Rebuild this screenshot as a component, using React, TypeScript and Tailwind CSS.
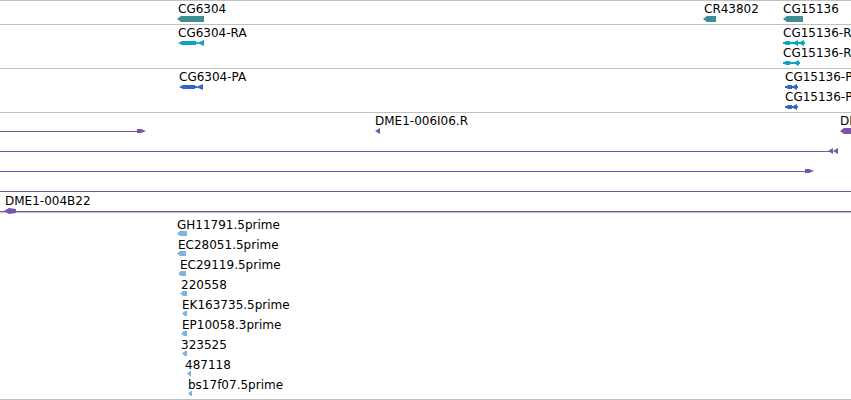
import React from 'react';

// colours picked off the reference
const TEAL = '#3d8f93';
const CYAN = '#0fa2c4';
const BLUE = '#3565c9';
const PURPLE = '#7655aa';
const EST = '#7db5e0';

// glyphs ---------------------------------------------------------------

function RevBar({ w, h = 6, color }: { w: number; h?: number; color: string }) {
  return (
    <svg width={w} height={h} className="block">
      <polygon points={`0,${h / 2} 4,0 ${w},0 ${w},${h} 4,${h}`} fill={color} />
    </svg>
  );
}

function Fish({ w, color }: { w: number; color: string }) {
  return (
    <svg width={w} height={6} className="block">
      <polygon points={`0,3 4,1 ${w - 8},1 ${w - 8},5 4,5`} fill={color} />
      <rect x={w - 9} y={2} width={3} height={2} fill={color} />
      <polygon points={`${w - 7},3 ${w},0 ${w},6`} fill={color} />
    </svg>
  );
}

function Arrows({ w, heads, color }: { w: number; heads: number[]; color: string }) {
  return (
    <svg width={w} height={6} className="block">
      <rect x={0} y={2} width={w} height={2} fill={color} />
      <polygon points="0,3 3,1 7,1 7,5 3,5" fill={color} />
      {heads.map(hx => (
        <polygon key={hx} points={`${hx},3 ${hx + 6},0 ${hx + 6},6`} fill={color} />
      ))}
    </svg>
  );
}

function Head({ dir, color = PURPLE, double = false }: { dir: 'l' | 'r'; color?: string; double?: boolean }) {
  if (dir === 'r')
    return (
      <svg width={9} height={6} className="block">
        <polygon points="0,1 4,1 9,3 4,5 0,5" fill={color} />
      </svg>
    );
  return (
    <svg width={double ? 11 : 5} height={6} className="block">
      <polygon points="0,3 5,0 5,6" fill={color} />
      {double && <polygon points="5,3 10,0 10,6" fill={color} />}
    </svg>
  );
}

// a feature sits at its genome position; label over glyph
function Feature({ x, label, dx = 0, top = 1, children }: {
  x: number; label?: string; dx?: number; top?: number; children: React.ReactNode;
}) {
  return (
    <div className="absolute flex flex-col" style={{ left: x, top }}>
      {label && <span className="whitespace-nowrap leading-[14px] text-black">{label}</span>}
      <div style={{ marginLeft: dx }}>{children}</div>
    </div>
  );
}

function Row({ children }: { children?: React.ReactNode }) {
  return <div className="relative h-[20px] shrink-0">{children}</div>;
}

// purple alignment line through the glyph row
function Rule({ to }: { to?: number }) {
  return <div className="absolute left-0 top-[18px] h-px bg-[#7655aa]" style={{ width: to ?? '100%' }} />;
}

function Track({ h, last = false, children }: { h: string; last?: boolean; children: React.ReactNode }) {
  return (
    <section className={`flex flex-col border-t border-[#c0c0c0] ${h} ${last ? 'border-b' : ''}`}>{children}</section>
  );
}

const ests = [
  { name: 'GH11791.5prime', tx: 177, ax: 0, aw: 10 },
  { name: 'EC28051.5prime', tx: 178, ax: -1, aw: 9 },
  { name: 'EC29119.5prime', tx: 180, ax: -2, aw: 8 },
  { name: '220558', tx: 181, ax: -1, aw: 7 },
  { name: 'EK163735.5prime', tx: 182, ax: 0, aw: 5 },
  { name: 'EP10058.3prime', tx: 182, ax: -1, aw: 6 },
  { name: '323525', tx: 181, ax: 1, aw: 5 },
  { name: '487118', tx: 185, ax: 2, aw: 4 },
  { name: 'bs17f07.5prime', tx: 188, ax: 0, aw: 4 },
];

export default function App() {
  return (
    <main className="w-[851px] h-[400px] overflow-hidden bg-white font-['DejaVu_Sans',sans-serif] text-[12px]">
      {/* genes */}
      <Track h="h-[24px]">
        <Row>
          <Feature x={178} label="CG6304" dx={-1}><RevBar w={27} color={TEAL} /></Feature>
          <Feature x={704} label="CR43802" dx={-1}><RevBar w={13} color={TEAL} /></Feature>
          <Feature x={783} label="CG15136"><RevBar w={20} color={TEAL} /></Feature>
        </Row>
      </Track>

      {/* transcripts */}
      <Track h="h-[44px]">
        <Row>
          <Feature x={178} label="CG6304-RA"><Fish w={26} color={CYAN} /></Feature>
          <Feature x={783} label="CG15136-RA"><Arrows w={22} heads={[9, 15]} color={CYAN} /></Feature>
        </Row>
        <Row>
          <Feature x={783} label="CG15136-RB"><Arrows w={17} heads={[10]} color={CYAN} /></Feature>
        </Row>
      </Track>

      {/* proteins */}
      <Track h="h-[44px]">
        <Row>
          <Feature x={179} label="CG6304-PA"><Fish w={24} color={BLUE} /></Feature>
          <Feature x={785} label="CG15136-PA"><Arrows w={13} heads={[6]} color={BLUE} /></Feature>
        </Row>
        <Row>
          <Feature x={785} label="CG15136-PB"><Arrows w={13} heads={[6]} color={BLUE} /></Feature>
        </Row>
      </Track>

      {/* BAC ends */}
      <Track h="h-[100px]">
        <Row>
          <Rule to={139} />
          <Feature x={137} top={15}><Head dir="r" /></Feature>
          <Feature x={375} label="DME1-006I06.R"><Head dir="l" /></Feature>
          <Feature x={840} label="DME1-006I06.F"><RevBar w={11} color={PURPLE} /></Feature>
        </Row>
        <Row>
          <Rule to={830} />
          <Feature x={828} top={15}><Head dir="l" double /></Feature>
        </Row>
        <Row>
          <Rule to={807} />
          <Feature x={805} top={15}><Head dir="r" /></Feature>
        </Row>
        <Row>
          <Rule />
        </Row>
        <Row>
          <Rule />
          <Feature x={5} label="DME1-004B22" dx={-1}>
            <svg width={12} height={6} className="block">
              <polygon points="0,3 5,0 12,1 12,5 5,6" fill={PURPLE} />
            </svg>
          </Feature>
        </Row>
      </Track>

      {/* ESTs */}
      <Track h="h-[188px]" last>
        <div className="flex flex-col pt-[5px]">
          {ests.map(e => (
            <div key={e.name} className="flex h-[20px] shrink-0 flex-col" style={{ paddingLeft: e.tx }}>
              <span className="whitespace-nowrap leading-[14px] text-black">{e.name}</span>
              <svg width={e.aw} height={5} className="-mt-px block" style={{ marginLeft: e.ax }}>
                <polygon points={`0,2.5 3,0 ${e.aw},0 ${e.aw},5 3,5`} fill={EST} />
              </svg>
            </div>
          ))}
        </div>
      </Track>
    </main>
  );
}
